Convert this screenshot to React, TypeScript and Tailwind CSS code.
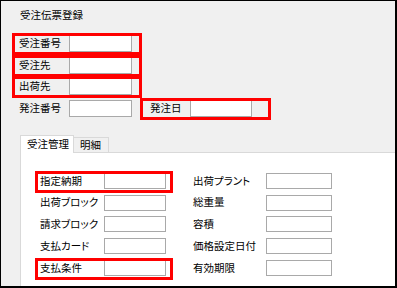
import React from "react";

type FieldProps = {
    label: string;
    labelWidth: string;
    inputWidth: string;
    inputHeight: string;
    highlight?: string;
};

const Field = ({ label, labelWidth, inputWidth, inputHeight, highlight }: FieldProps) => {
    return (
        <div className="relative flex items-center">
            <span className={`${labelWidth} whitespace-nowrap leading-none`}>{label}</span>
            <div className={`${inputWidth} ${inputHeight} bg-white border border-[#a9a9a9]`} />
            {highlight && (
                <div className={`absolute pointer-events-none border-[3px] border-[#ff0000] ${highlight}`} />
            )}
        </div>
    );
};

const topBox = "-left-[7px] -right-[10px] -top-[2px] -bottom-[3px]";
const panelBox = "-left-[5px] -right-[7px] -top-[2px] -bottom-[4px]";

const leftFields = ["指定納期", "出荷ブロック", "請求ブロック", "支払カード", "支払条件"];
const rightFields = ["出荷プラント", "総重量", "容積", "価格設定日付", "有効期限"];

const App = () => {
    return (
        <div
            className="
                w-[397px]
                h-[288px]
                overflow-hidden
                flex
                flex-col
                bg-[#f0f0f0]
                border-l
                border-t
                border-r-2
                border-b-2
                border-black
                text-[10.5px]
                text-black
                font-['Noto_Sans_CJK_JP',sans-serif]
                [font-feature-settings:'palt']
            "
        >
            <div className="pl-[19px] pt-[7px] leading-[14px]">受注伝票登録</div>

            <div className="pl-[18px] mt-[13px] flex flex-col items-start gap-y-[4.6px]">
                <Field label="受注番号" labelWidth="w-[50px]" inputWidth="w-[63px]" inputHeight="h-[17px]" highlight={topBox} />
                <Field label="受注先" labelWidth="w-[50px]" inputWidth="w-[63px]" inputHeight="h-[17px]" highlight={topBox} />
                <Field label="出荷先" labelWidth="w-[50px]" inputWidth="w-[63px]" inputHeight="h-[17px]" highlight={topBox} />
                <div className="flex items-center">
                    <Field label="発注番号" labelWidth="w-[50px]" inputWidth="w-[63px]" inputHeight="h-[17px]" />
                    <div className="ml-[18px]">
                        <Field
                            label="発注日"
                            labelWidth="w-[40px]"
                            inputWidth="w-[62px]"
                            inputHeight="h-[17px]"
                            highlight="-left-[10px] -right-[19px] -top-[2px] -bottom-[3px]"
                        />
                    </div>
                </div>
            </div>

            <div className="ml-[19px] mt-[18px] flex items-end">
                <div className="relative z-10 -mb-px w-[54px] h-[18px] pl-[6px] flex items-center bg-white border border-b-0 border-[#d9d9d9]">
                    受注管理
                </div>
                <div className="w-[35px] h-[15px] pl-[6px] flex items-center bg-[#f0f0f0] border border-l-0 border-b-0 border-[#d9d9d9]">
                    明細
                </div>
            </div>

            <div className="flex-1 ml-[19px] -mr-[4px] -mb-[4px] bg-white border border-[#d9d9d9] pt-[20px] pl-[19px]">
                <div className="flex flex-col gap-y-[5.75px]">
                    {leftFields.map((label, i) => (
                        <div key={label} className="flex items-center">
                            <Field
                                label={label}
                                labelWidth="w-[64px]"
                                inputWidth="w-[62px]"
                                inputHeight="h-[16px]"
                                highlight={i === 0 || i === 4 ? panelBox : undefined}
                            />
                            <div className="ml-[27px]">
                                <Field label={rightFields[i]} labelWidth="w-[73px]" inputWidth="w-[66px]" inputHeight="h-[16px]" />
                            </div>
                        </div>
                    ))}
                </div>
            </div>
        </div>
    );
};

export default App;
